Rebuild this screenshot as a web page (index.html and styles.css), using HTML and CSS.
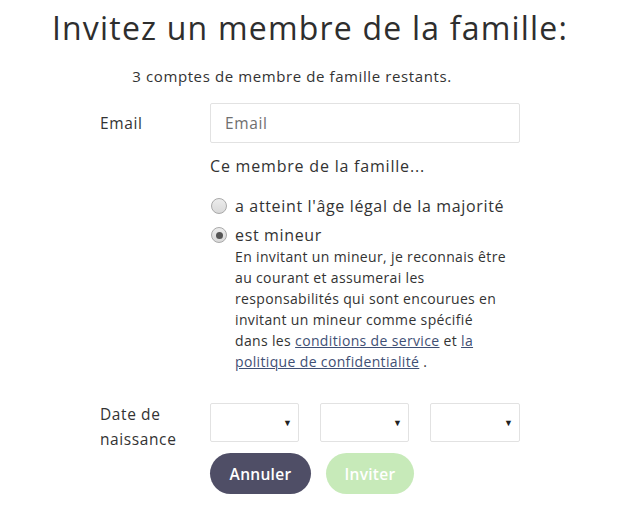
FILE: index.html
```html
<!DOCTYPE html>
<html lang="fr">
<head>
<meta charset="utf-8">
<link rel="stylesheet" href="styles.css">
</head>
<body>
<main class="page">
  <h1 class="title">Invitez un membre de la famille:</h1>
  <p class="subtitle">3 comptes de membre de famille restants.</p>
  <form class="form">
    <label class="label label-email" for="email">Email</label>
    <div class="field">
      <input class="input" id="email" type="text" placeholder="Email">
    </div>

    <div class="spacer"></div>
    <div class="field">
      <p class="question">Ce membre de la famille...</p>
      <label class="radio-row">
        <span class="radio"></span>
        <span class="radio-text">a atteint l'âge légal de la majorité</span>
      </label>
      <label class="radio-row">
        <span class="radio radio-checked"></span>
        <span class="radio-text">est mineur</span>
      </label>
      <p class="notice">En invitant un mineur, je reconnais être au courant et assumerai les responsabilités qui sont encourues en invitant un mineur comme spécifié dans les <a href="#" class="link">conditions de service</a> et <a href="#" class="link">la politique de confidentialité</a> .</p>
    </div>

    <div class="label label-date">Date de<br>naissance</div>
    <div class="field field-date">
      <div class="selects">
        <div class="select"><span class="caret">▼</span></div>
        <div class="select"><span class="caret">▼</span></div>
        <div class="select"><span class="caret">▼</span></div>
      </div>
      <div class="buttons">
        <button type="button" class="btn btn-cancel">Annuler</button>
        <button type="button" class="btn btn-invite">Inviter</button>
      </div>
    </div>
  </form>
</main>
</body>
</html>
```
FILE: styles.css
```css
* { box-sizing: border-box; }
body {
  margin: 0;
  background: #fff;
  color: #333;
  font-family: "Open Sans", "Noto Sans", sans-serif;
}
.page {
  width: 620px;
  padding-top: 8px;
}
.title {
  margin: 0;
  text-align: center;
  font-weight: 400;
  font-size: 32px;
  line-height: 40px;
  color: #2e2e2e;
  letter-spacing: 1.2px;
}
.subtitle {
  margin: 17px 0 0;
  padding-right: 36px;
  text-align: center;
  font-size: 15px;
  line-height: 22px;
  color: #333;
  letter-spacing: 0.6px;
}
.form {
  display: grid;
  grid-template-columns: 110px 310px;
  margin: 16px 0 0 100px;
}
.label {
  font-size: 15.5px;
  color: #333;
  line-height: 25px;
  letter-spacing: 0.6px;
}
.label-email { padding-top: 8px; }
.input {
  display: block;
  width: 310px;
  height: 40px;
  border: 1px solid #e2e2e2;
  border-radius: 2px;
  padding: 0 14px;
  font: inherit;
  font-size: 15.5px;
  letter-spacing: 0.6px;
  color: #333;
  outline: none;
}
.input::placeholder { color: #6f6f6f; }
.question {
  margin: 12px 0 0;
  font-size: 16px;
  line-height: 22px;
  letter-spacing: 0.8px;
}
.radio-row {
  display: flex;
  align-items: center;
  gap: 8px;
  font-size: 16px;
  line-height: 22px;
  letter-spacing: 0.65px;
}
.radio-row:first-of-type { margin-top: 18px; }
.radio-row + .radio-row { margin-top: 7px; }
.radio {
  width: 16px;
  height: 16px;
  border-radius: 50%;
  border: 1px solid #a9a9a9;
  background: linear-gradient(#ececec, #d9d9d9);
  display: flex;
  align-items: center;
  justify-content: center;
  margin-left: 1px;
}
.radio-checked::after {
  content: "";
  width: 7px;
  height: 7px;
  border-radius: 50%;
  background: #555;
}
.notice {
  width: 273px;
  margin: 0 0 0 25px;
  font-size: 14px;
  line-height: 21px;
  letter-spacing: 0.35px;
  color: #333;
}
.link {
  color: #3f5075;
  text-decoration: underline;
}
.form > .label-date { margin-top: 30px; }
.field-date { margin-top: 31px; }
.selects {
  display: flex;
  gap: 21px;
}
.select {
  flex: 0 0 89px;
  height: 39px;
  border: 1px solid #e2e2e2;
  border-radius: 2px;
  position: relative;
}
.select:last-child { flex-basis: 90px; }
.caret {
  position: absolute;
  right: 6px;
  top: 12px;
  font-size: 9px;
  color: #222;
}
.buttons {
  display: flex;
  gap: 15px;
  margin-top: 11px;
}
.btn {
  height: 41px;
  border: none;
  border-radius: 21px;
  font-family: inherit;
  font-size: 15.5px;
  font-weight: 600;
  letter-spacing: 0.3px;
  color: #fff;
  padding: 0;
}
.btn-cancel { width: 101px; background: #4f4e66; }
.btn-invite { width: 88px; background: #c7eab9; }
```
